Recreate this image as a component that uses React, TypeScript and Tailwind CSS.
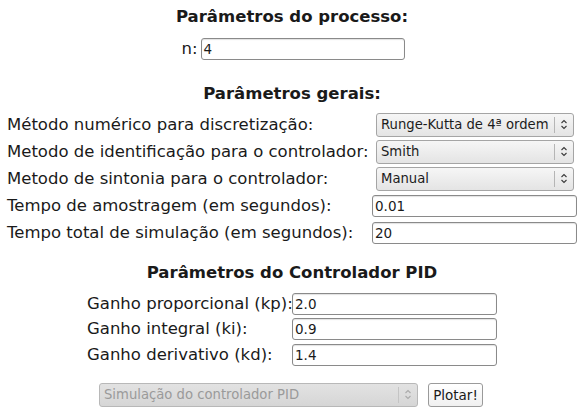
import React from "react";

const font = { fontFamily: '"DejaVu Sans", sans-serif' };

function Chevrons({ color = "#333" }: { color?: string }) {
  return (
    <svg width="8" height="11" viewBox="0 0 8 11" fill="none" stroke={color} strokeWidth="1.1">
      <path d="M1.5 4 L4 1.5 L6.5 4" />
      <path d="M1.5 7 L4 9.5 L6.5 7" />
    </svg>
  );
}

function Select({ value, className = "", disabled = false }: { value: string; className?: string; disabled?: boolean }) {
  return (
    <div
      className={
        "flex items-center h-[24px] rounded-[3px] border " +
        (disabled
          ? "border-[#b8b8b8] bg-gradient-to-b from-[#e2e2e2] to-[#d6d6d6] text-[#9a9a9a] "
          : "border-[#a5a5a5] bg-gradient-to-b from-[#f6f6f6] to-[#e4e4e4] text-[#1c1c1c] ") +
        className
      }
    >
      <div className="flex-1 min-w-0 pl-[4px] text-[13.2px] whitespace-nowrap leading-[18px]">{value}</div>
      <div className={"w-px h-[16px] shrink-0 " + (disabled ? "bg-[#c4c4c4]" : "bg-[#b5b5b5]")} />
      <div className="w-[18px] shrink-0 flex items-center justify-center">
        <Chevrons color={disabled ? "#aaa" : "#3a3a3a"} />
      </div>
    </div>
  );
}

function Input({ value, className = "" }: { value: string; className?: string }) {
  return (
    <div
      className={
        "flex items-center h-[22px] rounded-[3px] border border-[#8a8a8a] bg-white pl-[2px] text-[13.5px] text-[#1a1a1a] leading-[18px] shadow-[inset_0_1px_1px_rgba(0,0,0,0.12)] " +
        className
      }
    >
      {value}
    </div>
  );
}

export default function App() {
  return (
    <div className="w-[584px] h-[413px] bg-white text-[#1a1a1a] overflow-hidden" style={font}>
      {/* Section 1 */}
      <div className="pt-[7px] text-center font-bold text-[16.5px] leading-[20px]">Parâmetros do processo:</div>
      <div className="mt-[11px] flex items-center justify-center pl-[2px]">
        <span className="text-[16.5px] leading-[20px] mr-[3px]">n:</span>
        <Input value="4" className="w-[204px] h-[21px]" />
      </div>

      {/* Section 2 */}
      <div className="mt-[24px] text-center font-bold text-[16.5px] leading-[20px]">Parâmetros gerais:</div>
      <div className="mt-[7px] pl-[7px] grid grid-cols-[365px_205px] auto-rows-[27px] items-center text-[16.5px] leading-[20px] whitespace-nowrap">
        <span>Método numérico para discretização:</span>
        <Select value="Runge-Kutta de 4ª ordem" className="ml-[4px] w-[198px]" />
        <span>Metodo de identificação para o controlador:</span>
        <Select value="Smith" className="ml-[4px] w-[198px]" />
        <span>Metodo de sintonia para o controlador:</span>
        <Select value="Manual" className="ml-[4px] w-[198px]" />
        <span>Tempo de amostragem (em segundos):</span>
        <Input value="0.01" className="w-[205px]" />
        <span>Tempo total de simulação (em segundos):</span>
        <Input value="20" className="w-[205px]" />
      </div>

      {/* Section 3 */}
      <div className="mt-[17px] text-center font-bold text-[16.5px] leading-[20px]">Parâmetros do Controlador PID</div>
      <div className="mt-[8px] pl-[87px] grid grid-cols-[205px_205px] auto-rows-[25.5px] items-center text-[16.5px] leading-[20px] whitespace-nowrap">
        <span>Ganho proporcional (kp):</span>
        <Input value="2.0" className="h-[21px]" />
        <span>Ganho integral (ki):</span>
        <Input value="0.9" className="h-[21px]" />
        <span>Ganho derivativo (kd):</span>
        <Input value="1.4" className="h-[21px]" />
      </div>

      {/* Bottom */}
      <div className="mt-[15px] pl-[99px] flex items-center gap-[10px]">
        <Select value="Simulação do controlador PID" disabled className="w-[319px]" />
        <div className="h-[24px] w-[55px] flex items-center justify-center rounded-[3px] border border-[#9a9a9a] bg-gradient-to-b from-[#ffffff] to-[#f0f0f0] text-[13.5px] leading-[18px] text-[#1a1a1a]">
          Plotar!
        </div>
      </div>
    </div>
  );
}
